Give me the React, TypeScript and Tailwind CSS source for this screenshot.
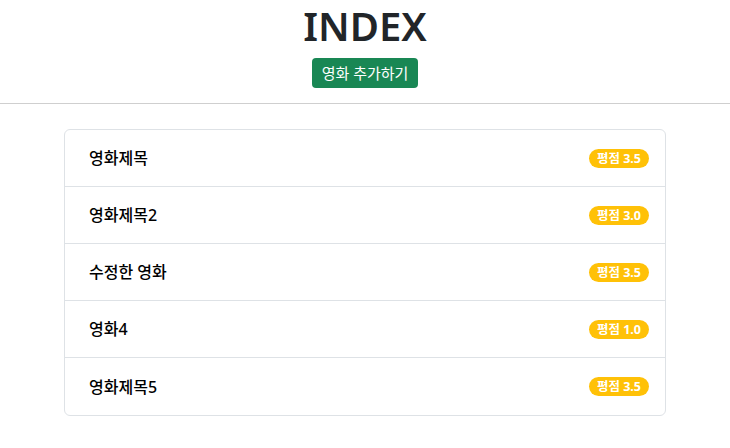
import React from "react";

const movies = [
  { title: "영화제목", rating: "3.5" },
  { title: "영화제목2", rating: "3.0" },
  { title: "수정한 영화", rating: "3.5" },
  { title: "영화4", rating: "1.0" },
  { title: "영화제목5", rating: "3.5" },
];

export default function App() {
  return (
    <div
      className="min-h-[448px] bg-white text-[#212529]"
      style={{ fontFamily: '"Noto Sans", "Noto Sans CJK KR", sans-serif' }}
    >
      <header className="flex flex-col items-center border-b border-[#cfcfcf] pb-[15px] pt-[2px]">
        <h1 className="text-[40px] font-semibold leading-[48px]">INDEX</h1>
        <button
          type="button"
          className="mt-[8px] h-[30px] rounded-[4px] bg-[#198754] px-[10px] text-[15px] leading-[30px] text-white"
        >
          영화 추가하기
        </button>
      </header>

      <ul className="mx-auto mt-[25px] w-[602px] rounded-[6px] border border-[#dee2e6]">
        {movies.map((m, i) => (
          <li
            key={i}
            className="flex h-[57px] items-center justify-between border-b border-[#dee2e6] pl-[24px] pr-[16px] last:border-b-0"
          >
            <span className="text-[16px] font-medium text-black">{m.title}</span>
            <span className="rounded-full bg-[#ffc107] px-[8px] text-[12.5px] font-bold leading-[19px] text-white">
              평점 {m.rating}
            </span>
          </li>
        ))}
      </ul>
    </div>
  );
}
